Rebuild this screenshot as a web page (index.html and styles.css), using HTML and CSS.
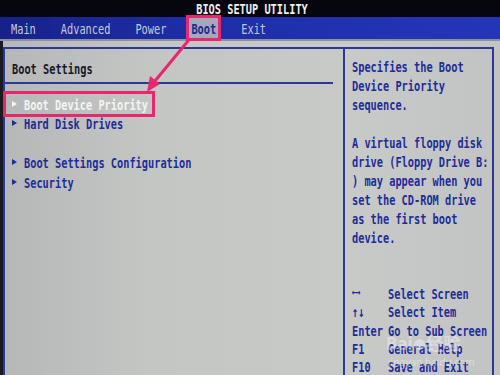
FILE: index.html
```html
<!DOCTYPE html>
<html>
<head>
<meta charset="utf-8">
<link rel="stylesheet" href="styles.css">
</head>
<body>
<div class="screen">
  <div class="titlebar"><span class="t">BIOS SETUP UTILITY</span></div>
  <nav class="menubar">
    <span class="menu-item"><span class="t">Main</span></span>
    <span class="menu-item"><span class="t">Advanced</span></span>
    <span class="menu-item"><span class="t">Power</span></span>
    <span class="menu-item menu-item--active"><span class="t">Boot</span></span>
    <span class="menu-item"><span class="t">Exit</span></span>
  </nav>
  <div class="frame">
    <section class="left">
      <h1 class="heading"><span class="t">Boot Settings</span></h1>
      <div class="rule"></div>
      <ul class="items">
        <li class="item item--selected"><span class="tri"></span><span class="t">Boot Device Priority</span></li>
        <li class="item"><span class="tri"></span><span class="t">Hard Disk Drives</span></li>
        <li class="item item--blank"></li>
        <li class="item"><span class="tri"></span><span class="t">Boot Settings Configuration</span></li>
        <li class="item"><span class="tri"></span><span class="t">Security</span></li>
      </ul>
    </section>
    <aside class="right">
      <div class="help">
        <div class="line"><span class="t">Specifies the Boot</span></div>
        <div class="line"><span class="t">Device Priority</span></div>
        <div class="line"><span class="t">sequence.</span></div>
        <div class="line"></div>
        <div class="line"><span class="t">A virtual floppy disk</span></div>
        <div class="line"><span class="t">drive (Floppy Drive B:</span></div>
        <div class="line"><span class="t">) may appear when you</span></div>
        <div class="line"><span class="t">set the CD-ROM drive</span></div>
        <div class="line"><span class="t">as the first boot</span></div>
        <div class="line"><span class="t">device.</span></div>
      </div>
      <div class="keys">
        <span class="key key--arrow"><span class="t">←→</span></span><span class="desc"><span class="t">Select Screen</span></span>
        <span class="key"><span class="t">↑↓</span></span><span class="desc"><span class="t">Select Item</span></span>
        <span class="key"><span class="t">Enter</span></span><span class="desc"><span class="t">Go to Sub Screen</span></span>
        <span class="key"><span class="t">F1</span></span><span class="desc"><span class="t">General Help</span></span>
        <span class="key"><span class="t">F10</span></span><span class="desc"><span class="t">Save and Exit</span></span>
      </div>
    </aside>
  </div>
  <svg class="annot" width="500" height="375" viewBox="0 0 500 375">
    <line x1="188" y1="41" x2="155" y2="81" stroke="#e8286e" stroke-width="3" stroke-linecap="round"/>
    <polygon points="147,92 160,84 150,76" fill="#e8286e"/>
  </svg>
  <div class="watermark">
    <div class="wm-brand">Bai<span class="wm-paw">●</span>经验</div>
    <div class="wm-url">jingyan.baidu.com</div>
  </div>
</div>
</body>
</html>
```
FILE: styles.css
```css
html, body {
  margin: 0;
  padding: 0;
}
body {
  width: 500px;
  height: 375px;
  overflow: hidden;
  background: #c2c4c2;
  font-family: "DejaVu Sans Mono", "Liberation Mono", monospace;
  font-size: 10.3px;
  font-weight: bold;
}
.screen {
  position: relative;
  width: 500px;
  height: 375px;
  overflow: hidden;
  background: linear-gradient(90deg, #1a1a22 0, #1a1a22 3px, #b6b8b8 3px, #c4c6c4 30%, #c8cac8 70%, #c2c4c4 100%);
}
.t {
  display: inline-block;
  transform: scaleY(1.4);
  white-space: pre;
}
.titlebar {
  height: 17px;
  line-height: 19px;
  background: #06060e;
  color: #f0f0f0;
  text-align: center;
  padding-left: 4px;
}
.menubar {
  height: 22px;
  display: flex;
  align-items: stretch;
  gap: 25px;
  padding-left: 11px;
  background: linear-gradient(90deg, #16228a 0%, #1e2ea8 40%, #2436b8 100%);
  color: #c6cad8;
  font-weight: normal;
  border-bottom: 2px solid #8c90a8;
}
.menu-item {
  display: flex;
  align-items: center;
  line-height: 20px;
}
.menu-item--active {
  margin: 1px -2px 1px;
  padding: 0 2px;
  background: #a4a8ba;
  color: #1c2a8e;
  font-weight: bold;
  outline: 3px solid #e8286e;
}
.frame {
  margin: 6px 6px 0 3px;
  height: 340px;
  border: 2px solid #2a3896;
  border-bottom: none;
  display: grid;
  grid-template-columns: 338px 1fr;
}
.left {
  color: #1e2c98;
}
.heading {
  margin: 0;
  padding: 11px 0 0 7px;
  font-size: 10.3px;
  line-height: 19px;
  color: #16182a;
}
.rule {
  margin: 3px 0 0 0;
  width: 328px;
  height: 2px;
  background: #2a3896;
}
.items {
  list-style: none;
  margin: 10px 0 0 0;
  padding: 0;
}
.item {
  display: flex;
  align-items: center;
  height: 19.5px;
  padding-left: 7px;
}
.item--selected {
  width: fit-content;
  margin-left: 1px;
  padding: 0 4px 0 6px;
  color: #f4f4f4;
  outline: 3px solid #e8286e;
}
.tri {
  width: 0;
  height: 0;
  border-top: 3.5px solid transparent;
  border-bottom: 3.5px solid transparent;
  border-left: 5px solid currentColor;
  margin-right: 7px;
}
.right {
  border-left: 2px solid #2a3896;
  padding: 9px 0 0 7px;
  color: #1e2c98;
}
.line {
  height: 19px;
  line-height: 19px;
}
.keys {
  margin-top: 36px;
  display: grid;
  grid-template-columns: 36px auto;
  grid-auto-rows: 18.3px;
  line-height: 18.3px;
}
.key--arrow {
  font-size: 8px;
  letter-spacing: -1px;
}
.annot {
  position: absolute;
  left: 0;
  top: 0;
  pointer-events: none;
}
.watermark {
  position: absolute;
  left: 386px;
  top: 334px;
  color: rgba(255, 255, 255, 0.4);
  font-family: "Noto Sans", "Noto Sans CJK SC", sans-serif;
  font-weight: bold;
}
.wm-brand {
  font-size: 17px;
  line-height: 20px;
}
.wm-paw {
  font-size: 12px;
  margin: 0 1px;
}
.wm-url {
  font-size: 10px;
  font-weight: normal;
  line-height: 12px;
  padding-left: 2px;
}
```
